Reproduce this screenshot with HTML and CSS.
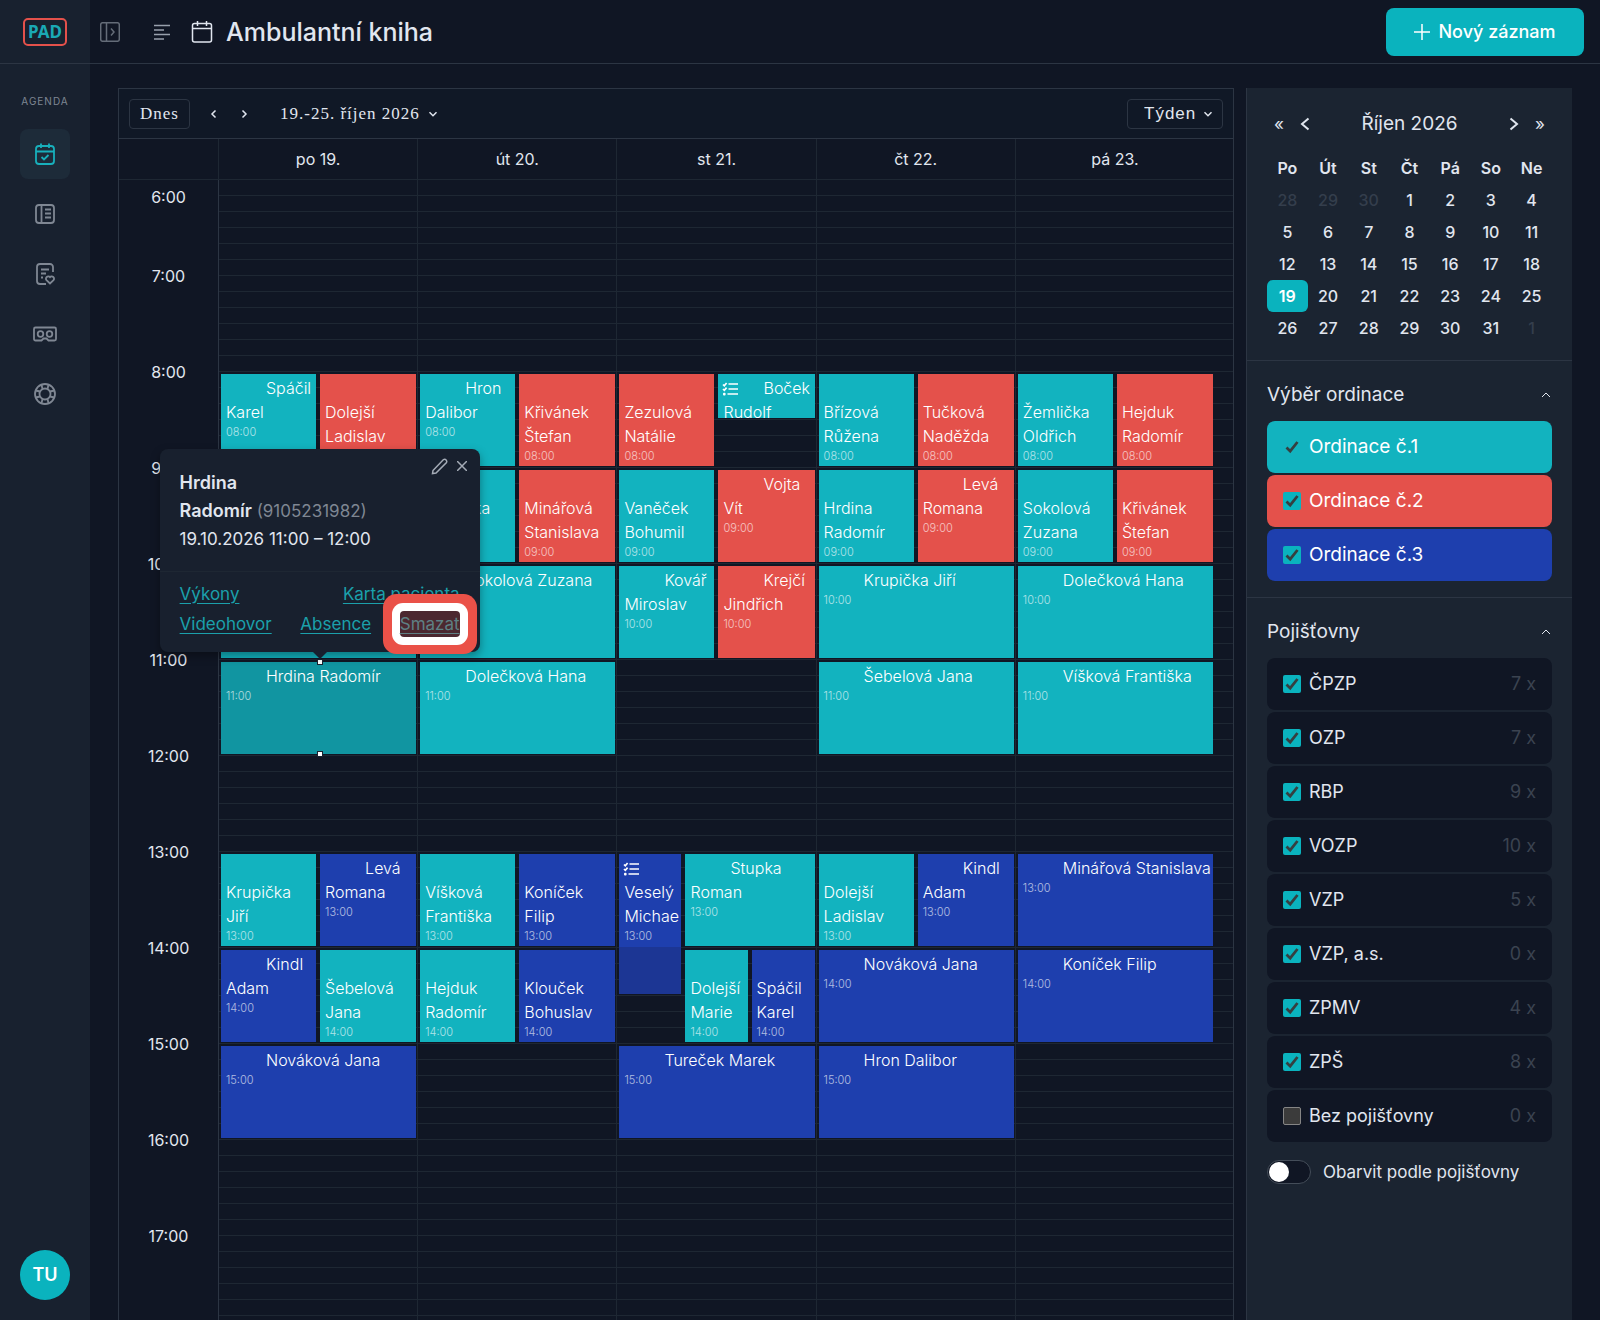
FILE: index.html
```html
<!DOCTYPE html>
<html lang="cs">
<head>
<meta charset="utf-8">
<meta name="viewport" content="width=device-width, initial-scale=1">
<title>Ambulantní kniha</title>
<link rel="stylesheet" href="styles.css">
</head>
<body>
<svg class="defs" width="0" height="0" aria-hidden="true">
  <symbol id="tasks" viewBox="0 0 16 14"><path d="M1 2.5l1.3 1.3L4.6 1M1 7l1.3 1.3L4.6 5.6M6.5 2H16M6.5 7H16M5.5 12H16" fill="none" stroke="currentColor" stroke-width="1.7"/><rect x="1" y="10.8" width="2.6" height="2.6" rx="1" fill="currentColor" stroke="none"/></symbol>
  <symbol id="down" viewBox="0 0 10 10"><path d="M1.5 3.2L5 6.7l3.5-3.5" fill="none" stroke="currentColor" stroke-width="1.5"/></symbol>
  <symbol id="up" viewBox="0 0 10 10"><path d="M1 7l4-4 4 4" fill="none" stroke="currentColor" stroke-width="1"/></symbol>
</svg>
<div class="app">
  <aside class="sidebar">
    <a class="logo" href="#" aria-label="PAD"><span class="logo-box">PAD</span></a>
    <nav class="menu" aria-label="Agenda">
      <p class="menu-title">AGENDA</p>
      <a class="menu-item is-active" href="#" aria-label="Ambulantní kniha"><svg width="24" height="24" viewBox="0 0 24 24"><rect x="3" y="4" width="18" height="18" rx="3"/><path d="M3 9.5h18M8 1.5V6M16 1.5V6M8.5 15l2.500 2.5 4.500-4.500"/></svg></a>
      <a class="menu-item" href="#" aria-label="Kartotéka"><svg width="24" height="24" viewBox="0 0 24 24"><rect x="3" y="3" width="18" height="18" rx="3"/><path d="M8.5 3v18M12 7.5h6M12 11.5h6M12 15.5h6"/></svg></a>
      <a class="menu-item" href="#" aria-label="Recepty"><svg width="24" height="24" viewBox="0 0 24 24"><path d="M20 10V5a3 3 0 0 0-3-3H7a3 3 0 0 0-3 3v14a3 3 0 0 0 3 3h6M8 7.5h8M8 11.5h5M8 15.5h2"/><path d="M17 21.5l-3.500-3.300a2.200 2.200 0 0 1 3.500-3 2.200 2.200 0 0 1 3.500 3z"/></svg></a>
      <a class="menu-item" href="#" aria-label="Video"><svg width="26" height="24" viewBox="0 0 26 24"><path d="M3.500 5.500h19a1.500 1.500 0 0 1 1.500 1.500v10a1.500 1.500 0 0 1-1.500 1.500h-6l-2-2h-3l-2 2h-6A1.500 1.500 0 0 1 2 17V7a1.500 1.500 0 0 1 1.500-1.500z"/><circle cx="8.500" cy="12" r="2.800"/><circle cx="17.500" cy="12" r="2.800"/></svg></a>
      <a class="menu-item" href="#" aria-label="Nápověda"><svg width="24" height="24" viewBox="0 0 24 24"><circle cx="12" cy="12" r="10"/><circle cx="12" cy="12" r="5.500"/><path d="M8.500 2.700l1 4.300M15.500 2.700l-1 4.300M8.500 21.300l1-4.300M15.500 21.300l-1-4.300M2.700 8.500l4.300 1M2.700 15.500l4.300-1M21.300 8.500l-4.300 1M21.300 15.500l-4.300-1"/></svg></a>
    </nav>
    <button class="avatar" type="button">TU</button>
  </aside>

  <div class="page">
    <header class="topbar">
      <button class="plain dim" type="button" aria-label="Rozbalit menu"><svg width="20" height="20" viewBox="0 0 20 20"><rect x=".7" y=".7" width="18.600" height="18.600" rx="2"/><path d="M6.500 1v18M11 6.500l3 3.500-3 3.500"/></svg></button>
      <button class="plain lines" type="button" aria-label="Seznam"><svg width="18" height="16" viewBox="0 0 18 16"><path d="M1 1.500h16M1 6h10M1 10.500h16M1 15h10"/></svg></button>
      <svg class="title-icon" width="22" height="24" viewBox="0 0 22 24"><rect x="1.500" y="3.500" width="19" height="18.500" rx="2"/><path d="M1.500 8.500h19M6.500 1v5M15.500 1v5"/></svg>
      <h1>Ambulantní kniha</h1>
      <button class="new" type="button"><svg width="16" height="16" viewBox="0 0 16 16"><path d="M8 0v16M0 8h16"/></svg>Nový záznam</button>
    </header>

    <div class="content">
      <main class="calendar">
        <div class="toolbar">
          <button class="today" type="button">Dnes</button>
          <button class="plain step" type="button" aria-label="Předchozí"><svg width="10" height="10" viewBox="0 0 10 10"><path d="M6.500 1.500L3 5l3.500 3.500"/></svg></button>
          <button class="plain step" type="button" aria-label="Další"><svg width="10" height="10" viewBox="0 0 10 10"><path d="M3.500 1.500L7 5 3.500 8.500"/></svg></button>
          <button class="plain range" type="button">19.-25. říjen 2026<svg width="10" height="10"><use href="#down"/></svg></button>
          <div class="view"><select aria-label="Zobrazení"><option>Týden</option></select><svg width="10" height="10"><use href="#down"/></svg></div>
        </div>
        <div class="day-heads"><span></span><span>po 19.</span><span>út 20.</span><span>st 21.</span><span>čt 22.</span><span>pá 23.</span></div>
        <div class="grid">
          <div class="axis"><span>6:00</span><span>7:00</span><span>8:00</span><span>9:00</span><span>10:00</span><span>11:00</span><span>12:00</span><span>13:00</span><span>14:00</span><span>15:00</span><span>16:00</span><span>17:00</span></div>
          <div class="days">
            <section class="day mon">
              <article class="event teal h8 left"><p>Spáčil<br>Karel</p><time>08:00</time></article>
              <article class="event red h8 right"><p><br>Dolejší<br>Ladislav</p><time>08:00</time></article>
              <article class="event teal h10"></article>
              <article class="event teal h11 selected"><p>Hrdina Radomír</p><time>11:00</time></article>
              <article class="event teal h13 left"><p><br>Krupička<br>Jiří</p><time>13:00</time></article>
              <article class="event blue h13 right"><p>Levá<br>Romana</p><time>13:00</time></article>
              <article class="event blue h14 left"><p>Kindl<br>Adam</p><time>14:00</time></article>
              <article class="event teal h14 right"><p><br>Šebelová<br>Jana</p><time>14:00</time></article>
              <article class="event blue h15"><p>Nováková Jana</p><time>15:00</time></article>
              <div class="anchor h11">
                <i class="handle top"></i><i class="handle bottom"></i>
                <div class="popup" role="dialog" aria-label="Hrdina Radomír">
                  <div class="popup-tools">
                    <button class="plain" type="button" aria-label="Upravit"><svg width="18" height="18" viewBox="0 0 18 18"><path d="M2 13.500L12.500 2.600a2.200 2.200 0 0 1 3 3L5 16l-3.500.500z"/></svg></button>
                    <button class="plain" type="button" aria-label="Zavřít"><svg width="10" height="10" viewBox="0 0 10 10"><path d="M0 0l10 10M10 0L0 10"/></svg></button>
                  </div>
                  <div class="popup-info">
                    <p><b>Hrdina<br>Radomír</b> <span>(9105231982)</span></p>
                    <p>19.10.2026 11:00 – 12:00</p>
                  </div>
                  <div class="popup-links">
                    <div><a href="#">Výkony</a><a href="#">Karta pacienta</a></div>
                    <div><a href="#">Videohovor</a><a href="#">Absence</a><a class="marked" href="#">Smazat</a></div>
                  </div>
                </div>
              </div>
            </section>
            <section class="day">
              <article class="event teal h8 left"><p>Hron<br>Dalibor</p><time>08:00</time></article>
              <article class="event red h8 right"><p><br>Křivánek<br>Štefan</p><time>08:00</time></article>
              <article class="event teal h9 left"><p><br>Krupička<br>Jiří</p><time>09:00</time></article>
              <article class="event red h9 right"><p><br>Minářová<br>Stanislava</p><time>09:00</time></article>
              <article class="event teal h10"><p>Sokolová Zuzana</p><time>10:00</time></article>
              <article class="event teal h11"><p>Dolečková Hana</p><time>11:00</time></article>
              <article class="event teal h13 left"><p><br>Víšková<br>Františka</p><time>13:00</time></article>
              <article class="event blue h13 right"><p><br>Koníček<br>Filip</p><time>13:00</time></article>
              <article class="event teal h14 left"><p><br>Hejduk<br>Radomír</p><time>14:00</time></article>
              <article class="event blue h14 right"><p><br>Klouček<br>Bohuslav</p><time>14:00</time></article>
            </section>
            <section class="day">
              <article class="event red h8 left"><p><br>Zezulová<br>Natálie</p><time>08:00</time></article>
              <article class="event teal h8 right half-hour"><svg class="tasks" width="16" height="14"><use href="#tasks"/></svg><p>Boček<br>Rudolf</p></article>
              <article class="event teal h9 left"><p><br>Vaněček<br>Bohumil</p><time>09:00</time></article>
              <article class="event red h9 right"><p>Vojta<br>Vít</p><time>09:00</time></article>
              <article class="event teal h10 left"><p>Kovář<br>Miroslav</p><time>10:00</time></article>
              <article class="event red h10 right"><p>Krejčí<br>Jindřich</p><time>10:00</time></article>
              <article class="event blue h13 first-third overrun"><svg class="tasks" width="16" height="14"><use href="#tasks"/></svg><p><br>Veselý<br>Michae</p><time>13:00</time></article>
              <article class="event teal h13 last-two-thirds"><p>Stupka<br>Roman</p><time>13:00</time></article>
              <article class="event teal h14 mid-third"><p><br>Dolejší<br>Marie</p><time>14:00</time></article>
              <article class="event blue h14 last-third"><p><br>Spáčil<br>Karel</p><time>14:00</time></article>
              <article class="event blue h15"><p>Tureček Marek</p><time>15:00</time></article>
            </section>
            <section class="day">
              <article class="event teal h8 left"><p><br>Břízová<br>Růžena</p><time>08:00</time></article>
              <article class="event red h8 right"><p><br>Tučková<br>Naděžda</p><time>08:00</time></article>
              <article class="event teal h9 left"><p><br>Hrdina<br>Radomír</p><time>09:00</time></article>
              <article class="event red h9 right"><p>Levá<br>Romana</p><time>09:00</time></article>
              <article class="event teal h10"><p>Krupička Jiří</p><time>10:00</time></article>
              <article class="event teal h11"><p>Šebelová Jana</p><time>11:00</time></article>
              <article class="event teal h13 left"><p><br>Dolejší<br>Ladislav</p><time>13:00</time></article>
              <article class="event blue h13 right"><p>Kindl<br>Adam</p><time>13:00</time></article>
              <article class="event blue h14"><p>Nováková Jana</p><time>14:00</time></article>
              <article class="event blue h15"><p>Hron Dalibor</p><time>15:00</time></article>
            </section>
            <section class="day">
              <article class="event teal h8 left"><p><br>Žemlička<br>Oldřich</p><time>08:00</time></article>
              <article class="event red h8 right"><p><br>Hejduk<br>Radomír</p><time>08:00</time></article>
              <article class="event teal h9 left"><p><br>Sokolová<br>Zuzana</p><time>09:00</time></article>
              <article class="event red h9 right"><p><br>Křivánek<br>Štefan</p><time>09:00</time></article>
              <article class="event teal h10"><p>Dolečková Hana</p><time>10:00</time></article>
              <article class="event teal h11"><p>Víšková Františka</p><time>11:00</time></article>
              <article class="event blue h13"><p>Minářová Stanislava</p><time>13:00</time></article>
              <article class="event blue h14"><p>Koníček Filip</p><time>14:00</time></article>
            </section>
          </div>
        </div>
      </main>

      <aside class="panel">
        <section class="mini">
          <div class="mini-head">
            <button class="plain" type="button" aria-label="Předchozí rok">«</button>
            <button class="plain" type="button" aria-label="Předchozí měsíc"><svg width="10" height="14" viewBox="0 0 10 14"><path d="M8.500 1.500L2 7l6.500 5.500"/></svg></button>
            <h2>Říjen 2026</h2>
            <button class="plain" type="button" aria-label="Další měsíc"><svg width="10" height="14" viewBox="0 0 10 14"><path d="M1.500 1.500L8 7l-6.500 5.500"/></svg></button>
            <button class="plain" type="button" aria-label="Další rok">»</button>
          </div>
          <table>
            <thead><tr><th>Po</th><th>Út</th><th>St</th><th>Čt</th><th>Pá</th><th>So</th><th>Ne</th></tr></thead>
            <tbody>
              <tr><td class="out">28</td><td class="out">29</td><td class="out">30</td><td>1</td><td>2</td><td>3</td><td>4</td></tr>
              <tr><td>5</td><td>6</td><td>7</td><td>8</td><td>9</td><td>10</td><td>11</td></tr>
              <tr><td>12</td><td>13</td><td>14</td><td>15</td><td>16</td><td>17</td><td>18</td></tr>
              <tr><td class="current">19</td><td>20</td><td>21</td><td>22</td><td>23</td><td>24</td><td>25</td></tr>
              <tr><td>26</td><td>27</td><td>28</td><td>29</td><td>30</td><td>31</td><td class="out">1</td></tr>
            </tbody>
          </table>
        </section>
        <section class="group">
          <h2>Výběr ordinace <svg width="10" height="10"><use href="#up"/></svg></h2>
          <label class="row teal"><input type="checkbox" checked>Ordinace č.1</label>
          <label class="row red"><input type="checkbox" checked>Ordinace č.2</label>
          <label class="row blue"><input type="checkbox" checked>Ordinace č.3</label>
        </section>
        <section class="group">
          <h2>Pojišťovny <svg width="10" height="10"><use href="#up"/></svg></h2>
          <label class="row"><input type="checkbox" checked>ČPZP<span>7 x</span></label>
          <label class="row"><input type="checkbox" checked>OZP<span>7 x</span></label>
          <label class="row"><input type="checkbox" checked>RBP<span>9 x</span></label>
          <label class="row"><input type="checkbox" checked>VOZP<span>10 x</span></label>
          <label class="row"><input type="checkbox" checked>VZP<span>5 x</span></label>
          <label class="row"><input type="checkbox" checked>VZP, a.s.<span>0 x</span></label>
          <label class="row"><input type="checkbox" checked>ZPMV<span>4 x</span></label>
          <label class="row"><input type="checkbox" checked>ZPŠ<span>8 x</span></label>
          <label class="row"><input type="checkbox">Bez pojišťovny<span>0 x</span></label>
          <label class="toggle"><input type="checkbox" role="switch">Obarvit podle pojišťovny</label>
        </section>
      </aside>
    </div>
  </div>
</div>
</body>
</html>
```
FILE: styles.css
```css
:root {
  --bg: #101624;
  --surface: #18212f;
  --line: #2c3543;
  --slot: #1e2733;
  --text: #e1e6ef;
  --dim: #7f8793;
  --teal: #12b3bf;
  --red: #e4514b;
  --blue: #1e3fae;
}

* { box-sizing: border-box; }
body, h1, h2, p { margin: 0; }
body {
  background: var(--bg);
  color: var(--text);
  font: 16px/24px Inter, "Liberation Sans", sans-serif;
}
svg { fill: none; stroke: currentColor; stroke-width: 1.5; flex: none; }
.defs { position: absolute; }
button, select, input { font: inherit; color: inherit; margin: 0; }
.plain {
  display: flex;
  align-items: center;
  justify-content: center;
  padding: 0;
  border: 0;
  background: none;
}

.app { display: flex; height: 100vh; overflow: hidden; }

/* Sidebar */
.sidebar {
  display: flex;
  flex-direction: column;
  align-items: center;
  width: 90px;
  flex: none;
  padding-bottom: 20px;
  background: var(--surface);
}
.logo {
  display: flex;
  align-items: center;
  justify-content: center;
  width: 100%;
  height: 64px;
  border-bottom: 1px solid var(--line);
  text-decoration: none;
}
.logo-box {
  width: 44px;
  border: 2px solid var(--red);
  border-radius: 5px;
  color: #1aa9b5;
  font: 700 17px/24px "Noto Sans", sans-serif;
  text-align: center;
}
.menu { display: flex; flex-direction: column; gap: 10px; align-items: center; flex: 1; padding-top: 28px; }
.menu-title { margin-bottom: 9px; color: var(--dim); font-size: 10px; line-height: 18px; letter-spacing: 1px; }
.menu-item {
  display: flex;
  align-items: center;
  justify-content: center;
  width: 50px;
  height: 50px;
  border-radius: 8px;
  color: var(--dim);
}
.menu-item.is-active { background: #1d2b39; color: #18b0bc; }
.menu-item svg { stroke-width: 1.8; }
.avatar {
  width: 50px;
  height: 50px;
  border: 0;
  border-radius: 50%;
  background: #0ab3be;
  color: #fff;
  font-size: 18px;
  font-weight: 600;
}

/* Top bar */
.page { display: flex; flex-direction: column; flex: 1; min-width: 0; }
.topbar {
  display: flex;
  align-items: center;
  height: 64px;
  flex: none;
  padding: 0 16px 0 10px;
  border-bottom: 1px solid var(--line);
}
.dim { color: #646c78; }
.lines { margin: 0 20px 0 33px; color: #98a0ac; }
h1 { margin-left: 13px; font-size: 25px; line-height: 32px; font-weight: 500; }
.new {
  display: flex;
  align-items: center;
  justify-content: center;
  gap: 8px;
  width: 198px;
  height: 48px;
  margin-left: auto;
  border: 0;
  border-radius: 8px;
  background: #0ab3be;
  color: #fff;
  font-size: 18px;
  font-weight: 500;
}

.content { display: flex; gap: 12px; flex: 1; min-height: 0; padding: 24px 28px 0; }

/* Week calendar */
.calendar {
  display: flex;
  flex-direction: column;
  flex: 1;
  min-width: 0;
  border: 1px solid var(--line);
  border-bottom: 0;
}
.toolbar {
  display: flex;
  align-items: center;
  height: 50px;
  flex: none;
  padding: 0 10px;
  border-bottom: 1px solid var(--line);
  background: #101826;
  font-family: "Liberation Serif", serif;
  font-size: 17px;
}
.today, .view select {
  height: 30px;
  border: 1px solid var(--line);
  border-radius: 4px;
  background: none;
  letter-spacing: 1px;
}
.today { width: 61px; margin-right: 9px; padding: 0; }
.step { width: 30px; height: 30px; }
.range { gap: 8px; margin-left: 21px; letter-spacing: 1px; }
.view { position: relative; margin-left: auto; }
.view select {
  width: 96px;
  padding: 0 16px;
  appearance: none;
  font-family: "Liberation Sans", sans-serif;
}
.view svg { position: absolute; right: 10px; top: 10px; pointer-events: none; }
.day-heads {
  display: grid;
  grid-template-columns: 99px repeat(5, 1fr);
  height: 41px;
  flex: none;
  padding-right: 19px;
  border-bottom: 1px solid var(--slot);
  line-height: 40px;
  text-align: center;
}
.day-heads span + span { border-left: 1px solid var(--slot); }
.grid { display: flex; flex: 1; min-height: 0; overflow: hidden; }
.axis { width: 99px; flex: none; }
.axis span { display: block; height: 96px; text-align: center; }
.axis span:first-child { height: 84px; padding-top: 5px; }
.days {
  display: grid;
  grid-template-columns: repeat(5, 1fr);
  flex: 1;
  height: 1152px;
  padding-right: 19px;
  background: repeating-linear-gradient(transparent 0 15px, var(--slot) 15px 16px);
}
.day {
  display: grid;
  grid-template-columns: repeat(6, 1fr);
  grid-template-rows: repeat(24, 48px);
  min-width: 0;
  border-left: 1px solid var(--slot);
}
.day.mon { border-color: var(--line); }

.event {
  position: relative;
  grid-column: 1 / -1;
  min-width: 0;
  margin: 2px 1px 2px 2px;
  padding: 2px 5px 0;
  overflow: hidden;
  color: #fff;
  font-weight: 300;
  white-space: nowrap;
}
.left, .first-third, .mid-third { margin-right: 2px; }
.event p { text-indent: 40px; }
.event time { display: block; font-size: 11px; line-height: 16px; opacity: .65; }
.teal { background: var(--teal); }
.red { background: var(--red); }
.blue { background: var(--blue); }
.selected { background: #1195a1; }
.tasks { position: absolute; left: 4px; top: 8px; }

.h8 { grid-row: 5 / span 2; }
.h9 { grid-row: 7 / span 2; }
.h10 { grid-row: 9 / span 2; }
.h11 { grid-row: 11 / span 2; }
.h13 { grid-row: 15 / span 2; }
.h14 { grid-row: 17 / span 2; }
.h15 { grid-row: 19 / span 2; }
.left { grid-column: 1 / 4; }
.right { grid-column: 4 / 7; }
.first-third { grid-column: 1 / 3; }
.mid-third { grid-column: 3 / 5; }
.last-third { grid-column: 5 / 7; }
.last-two-thirds { grid-column: 3 / 7; }
.half-hour { grid-row-end: span 1; }
.overrun { grid-row-end: span 3; background: linear-gradient(var(--blue) 93px, #1c3694 93px); }

/* Event popup */
.anchor { position: relative; grid-column: 1 / -1; z-index: 2; margin: 2px 1px 2px 2px; }
.handle {
  position: absolute;
  left: calc(50% - 2px);
  width: 6px;
  height: 6px;
  border: 1px solid var(--surface);
  background: #fff;
}
.handle.top { top: -3px; }
.handle.bottom { bottom: -3px; }
.popup {
  position: absolute;
  left: calc(50% - 159px);
  bottom: calc(100% + 10px);
  width: 320px;
  border-radius: 8px;
  background: #18202e;
  box-shadow: 0 4px 10px rgb(0 0 0 / 35%);
}
.popup::after {
  content: "";
  position: absolute;
  left: calc(50% - 7px);
  top: 100%;
  border: 7px solid transparent;
  border-top-color: #18202e;
  border-bottom: 0;
}
.popup-tools {
  position: absolute;
  right: 13px;
  top: 8px;
  display: flex;
  gap: 8px;
  color: #a4abb6;
}
.popup-info { padding: 20px 20px 18px; font-size: 17px; line-height: 28px; border-bottom: 1px solid var(--slot); }
.popup-info b { font-size: 18px; font-weight: 600; }
.popup-info span { color: var(--dim); }
.popup-links { padding: 7px 20px 13px; font-size: 17px; line-height: 30px; }
.popup-links div { display: flex; justify-content: space-between; }
.popup-links a { color: #1ba0ab; text-underline-offset: 3px; }
.popup-links .marked {
  height: 26px;
  margin: 2px 0;
  border-radius: 4px;
  background: #4b2830;
  box-shadow: 0 0 0 8px #fff, 0 0 0 17px #ea5148;
  color: #5e8084;
  line-height: 26px;
}

/* Right panel */
.panel {
  width: 326px;
  flex: none;
  border-left: 1px solid var(--line);
  background: #1b2431;
}
.panel h2 { font-size: 19px; font-weight: 400; }
.mini { padding: 22px 20px 16px; border-bottom: 1px solid var(--line); }
.mini-head { display: flex; align-items: center; height: 28px; padding: 0 7px; gap: 16px; }
.mini-head h2 { flex: 1; text-align: center; }
.mini-head svg { stroke-width: 2; }
.mini-head button { font-size: 17px; }
table { width: 100%; margin-top: 14px; border-collapse: collapse; table-layout: fixed; }
th, td { height: 32px; padding: 0; text-align: center; }
th { font-weight: 600; }
td { font-weight: 500; }
.out { color: #343e4c; }
.current { border-radius: 6px; background: #0ab3be; color: #fff; font-weight: 600; }

.group { display: flex; flex-direction: column; gap: 2px; padding: 18px 20px 16px; }
.group + .group { border-top: 1px solid var(--line); }
.group h2 { display: flex; align-items: center; justify-content: space-between; height: 32px; margin-bottom: 8px; padding-right: 1px; }
.row {
  display: flex;
  align-items: center;
  gap: 8px;
  height: 52px;
  padding: 0 16px;
  border-radius: 8px;
  font-size: 18px;
}
.row.teal, .row.red, .row.blue { color: #fff; font-size: 19px; }
.row:not(.teal, .red, .blue) { background: var(--bg); }
.row span { margin-left: auto; color: #3b4350; }
.row input {
  width: 18px;
  height: 18px;
  appearance: none;
  border: 1px solid #858585;
  border-radius: 2px;
  background: #3b3b3b;
}
.row input:checked {
  border: 0;
  background: #0ab3be url("data:image/svg+xml,%3Csvg xmlns='http://www.w3.org/2000/svg' viewBox='0 0 18 18'%3E%3Cpath d='M3.5 9.5l3.7 3.7L14.5 4' fill='none' stroke='%23353f40' stroke-width='2.8'/%3E%3C/svg%3E");
}
.row.teal input:checked { background-color: transparent; }
.toggle { display: flex; align-items: center; gap: 12px; margin-top: 16px; font-size: 17px; }
.toggle input {
  display: flex;
  width: 44px;
  height: 24px;
  padding: 1px;
  appearance: none;
  border: 1px solid #444d59;
  border-radius: 12px;
  background: var(--bg);
}
.toggle input::before { content: ""; width: 20px; height: 20px; border-radius: 50%; background: #fff; }
```
